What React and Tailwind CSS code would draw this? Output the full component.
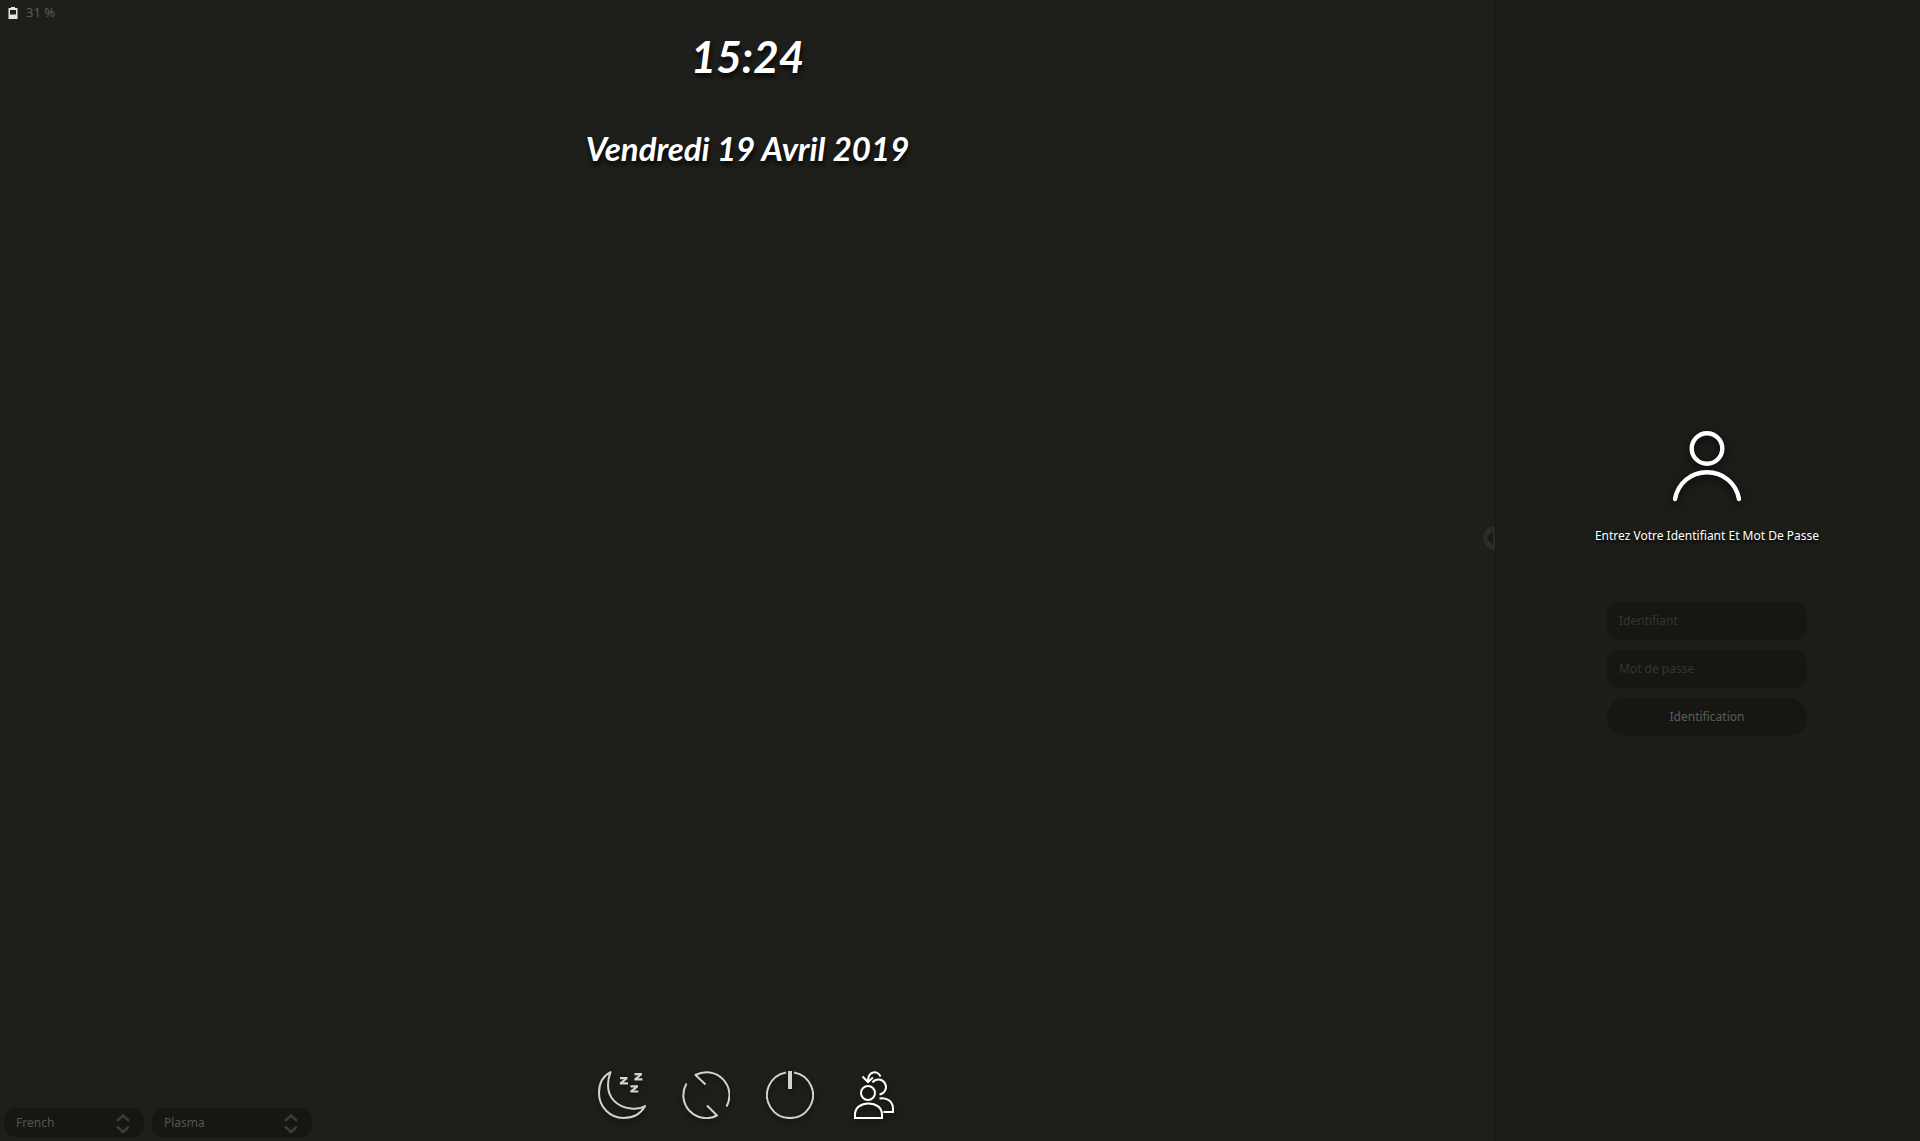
import React from "react";

const iconShadow = "drop-shadow-[0_3px_3px_rgba(0,0,0,0.6)]";

function MoonIcon() {
  return (
    <svg viewBox="0 0 48 48" className={`size-12 ${iconShadow}`} fill="none" stroke="#d2d2d0" strokeWidth="2" strokeLinejoin="round" aria-hidden="true">
      <path d="M12.500 1.200C5 5 1 12.500 1 22C1 36 12 47 25.500 47C35 47 43 42.500 47 35C43 37.500 38 38.300 33 37.500C18 36 10 26 10 14C10 9 11 5 12.500 1.200Z" />
      <g fill="#d2d2d0" stroke="none">
        <path d="M22 6H29.500V8L25.500 11.200H30V13.400H21.800V11.400L26 8.200H22Z" />
        <path d="M36.500 2H44V4L40 7.200H44.500V9.400H36.300V7.400L40.500 4.200H36.500Z" />
        <path d="M32.500 14.200H40V16.200L36 19.400H40.300V21.600H32.300V19.600L36.500 16.400H32.500Z" />
      </g>
    </svg>
  );
}

function RestartIcon() {
  return (
    <svg viewBox="0 0 48 48" className={`size-12 ${iconShadow}`} fill="none" stroke="#d2d2d0" strokeWidth="2" strokeLinejoin="round" aria-hidden="true">
      <path d="M23.500 13.500L13.500 4A23 23 0 0 1 44.500 35.500" />
      <path d="M4.500 12.500A23 23 0 0 0 35 44.500L25 34.500" />
    </svg>
  );
}

function PowerIcon() {
  return (
    <svg viewBox="0 0 48 48" className={`size-12 ${iconShadow}`} fill="none" stroke="#d2d2d0" strokeWidth="2" aria-hidden="true">
      <path d="M20 1.400A23 23 0 1 0 28 1.400" />
      <path d="M24 0V18" strokeWidth="4" />
    </svg>
  );
}

function SwitchUserIcon() {
  return (
    <svg viewBox="0 0 48 48" className={`size-12 ${iconShadow}`} fill="none" stroke="#fff" strokeWidth="2" aria-hidden="true">
      <circle cx="18" cy="22" r="7" />
      <path d="M5 47V43.500C5 36.500 11 32.500 18.500 32.500S32 36.500 32 43.500V47Z" />
      <path d="M22.500 11.500A7.500 7.500 0 1 1 29.500 23.500" />
      <path d="M29.500 27.500C37.500 26 43 31 43 38V41H33.500" />
      <path d="M30.500 5.500C28 -0.500 18 -1 18 10.500" />
      <path d="M12.500 5.500L18 11L23 6.500" />
    </svg>
  );
}

function UserIcon() {
  return (
    <svg viewBox="0 0 72 72" className="size-18 drop-shadow-[0_3px_5px_rgba(0,0,0,0.8)]" fill="none" stroke="#fff" strokeWidth="4.4" strokeLinecap="round" aria-hidden="true">
      <circle cx="36" cy="18.500" r="15.300" />
      <path d="M4 69C7 53 20 42.300 36 42.300S65 53 68 69" />
    </svg>
  );
}

function BatteryIcon() {
  return (
    <svg viewBox="0 0 10 12" className="h-3 w-2.5" fill="#e4e4e2" fillRule="evenodd" aria-hidden="true">
      <path d="M3 0h4v1h2.500v11h-9V1H3ZM2 3v4.500h6V3Z" />
    </svg>
  );
}

function Picker({ label, value, width }) {
  return (
    <div className={`relative ${width}`}>
      <select
        aria-label={label}
        defaultValue={value}
        className="block h-[29px] w-full appearance-none rounded-xl bg-[#161712] pr-8 pl-3 text-xs text-[#545551] outline-none"
      >
        <option>{value}</option>
      </select>
      <svg
        viewBox="0 0 14 20"
        className="pointer-events-none absolute top-1.5 right-3.5 h-5 w-3.5"
        fill="none"
        stroke="#3c3d39"
        strokeWidth="2.4"
        aria-hidden="true"
      >
        <path d="M1 7L7 1.500L13 7M1 12.500L7 18L13 12.500" />
      </svg>
    </div>
  );
}

const actions = [
  { label: "Mettre en veille", Icon: MoonIcon },
  { label: "Redémarrer", Icon: RestartIcon },
  { label: "Éteindre", Icon: PowerIcon },
  { label: "Changer d'utilisateur", Icon: SwitchUserIcon },
];

const field =
  "h-[38px] w-full rounded-xl bg-[#161712] px-3 text-xs text-[#8a8b87] outline-none placeholder:text-[#343531]";

export default function App() {
  return (
    <div className="flex min-h-screen bg-[#1e1e1a] font-['Noto_Sans',sans-serif] text-white">
      <main className="relative flex min-w-0 flex-1 flex-col">
        <div className="flex h-[26px] items-center gap-2 pl-2 text-[13px] text-[#5c5d59]">
          <BatteryIcon />
          <span>31 %</span>
        </div>

        <header className="flex flex-col items-center gap-8 text-center font-['Lato',cursive] font-bold italic [text-shadow:1px_4px_5px_rgba(0,0,0,0.8)]">
          <time className="text-[44px] leading-[60px]">15:24</time>
          <time className="text-[33px] leading-[60px]">Vendredi 19 Avril 2019</time>
        </header>

        <footer className="mt-auto grid grid-cols-[1fr_auto_1fr] items-end pb-1">
          <div className="flex gap-2 pl-1">
            <Picker label="Langue" value="French" width="w-[140px]" />
            <Picker label="Session" value="Plasma" width="w-40" />
          </div>
          <nav className="flex gap-9 pb-[18px]">
            {actions.map(({ label, Icon }) => (
              <button key={label} type="button" aria-label={label}>
                <Icon />
              </button>
            ))}
          </nav>
        </footer>

        <button type="button" aria-label="Masquer le panneau" className="absolute top-[526px] right-0">
          <svg viewBox="0 0 12 24" className="h-6 w-3" aria-hidden="true">
            <path d="M12 0A12 12 0 0 0 12 24Z" fill="#2b2c29" />
            <path d="M10 5V19L4 12Z" fill="#191a16" />
          </svg>
        </button>
      </main>

      <aside className="flex w-[425px] shrink-0 flex-col items-center justify-center border-l border-[#171814] bg-[#1c1d19] pt-6 pr-0.5">
        <UserIcon />
        <h1 className="mt-6 text-xs leading-5 [text-shadow:0_2px_3px_#000]">
          Entrez Votre Identifiant Et Mot De Passe
        </h1>
        <form className="mt-14 flex w-[200px] flex-col gap-2.5" onSubmit={(e) => e.preventDefault()}>
          <input type="text" aria-label="Identifiant" placeholder="Identifiant" className={field} />
          <input type="password" aria-label="Mot de passe" placeholder="Mot de passe" className={field} />
          <button type="submit" className="h-[38px] rounded-full bg-[#161712] text-xs text-[#5c5d59]">
            Identification
          </button>
        </form>
      </aside>
    </div>
  );
}
